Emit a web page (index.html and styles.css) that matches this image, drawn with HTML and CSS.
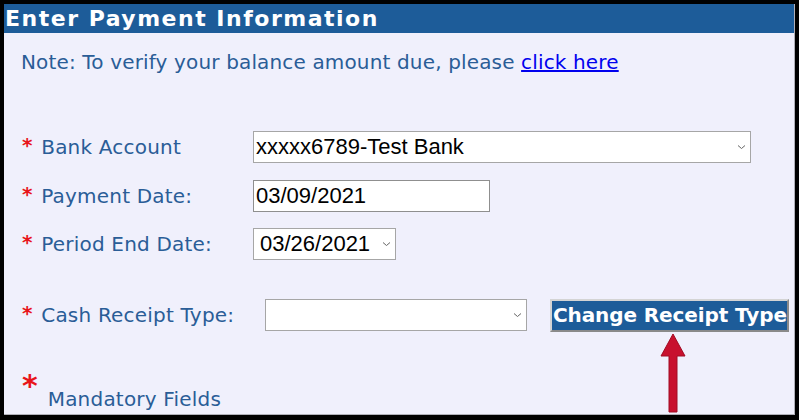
FILE: index.html
```html
<!DOCTYPE html>
<html>
<head>
<meta charset="utf-8">
<link rel="stylesheet" href="styles.css">
</head>
<body>
<div class="frame">
  <div class="panel">
    <div class="header">Enter Payment Information</div>
    <div class="content">
      <p class="note">Note: To verify your balance amount due, please <a href="#" class="link">click here</a></p>
      <div class="rows">
        <div class="row row-bank">
          <div class="label"><span class="star">*</span> Bank Account</div>
          <div class="select select-bank"><span class="value">xxxxx6789-Test Bank</span><svg class="chev" width="9" height="6" viewBox="0 0 9 6"><path d="M1 1.5 L4.5 4.5 L8 1.5" fill="none" stroke="#666" stroke-width="1"/></svg></div>
        </div>
        <div class="row row-pay">
          <div class="label"><span class="star">*</span> Payment Date:</div>
          <div class="input input-pay"><span class="value">03/09/2021</span></div>
        </div>
        <div class="row row-period">
          <div class="label"><span class="star">*</span> Period End Date:</div>
          <div class="select select-period"><span class="value">03/26/2021</span><svg class="chev" width="9" height="6" viewBox="0 0 9 6"><path d="M1 1.5 L4.5 4.5 L8 1.5" fill="none" stroke="#666" stroke-width="1"/></svg></div>
        </div>
        <div class="row row-cash">
          <div class="label label-cash"><span class="star">*</span> Cash Receipt Type:</div>
          <div class="select select-cash"><span class="value"></span><svg class="chev" width="9" height="6" viewBox="0 0 9 6"><path d="M1 1.5 L4.5 4.5 L8 1.5" fill="none" stroke="#666" stroke-width="1"/></svg></div>
          <button class="btn">Change Receipt Type</button>
        </div>
      </div>
      <div class="mandatory"><span class="bigstar">*</span><span class="mtext">Mandatory Fields</span></div>
    </div>
    <svg class="arrow" width="30" height="80" viewBox="0 0 30 80"><polygon points="15,0 27,22 19,22 19,78 11,78 11,22 3,22" fill="#c8102e" stroke="#a00c24" stroke-width="1" stroke-linejoin="round"/></svg>
  </div>
</div>
</body>
</html>
```
FILE: styles.css
```css
html, body {
  margin: 0;
  padding: 0;
  background: #000;
}
.frame {
  width: 799px;
  height: 420px;
  box-sizing: border-box;
  padding: 4px 4px 5px 4px;
  background: #000;
}
.panel {
  position: relative;
  width: 100%;
  height: 100%;
  box-sizing: border-box;
  background: #f0f0fc;
  border-right: 1px solid #b0b0b8;
  border-bottom: 1px solid #b0b0b8;
  font-family: "DejaVu Sans", Verdana, sans-serif;
  overflow: hidden;
}
.header {
  height: 29px;
  line-height: 29px;
  background: #1d5c99;
  color: #fff;
  font-weight: bold;
  font-size: 22px;
  letter-spacing: 1.5px;
  padding-left: 1px;
  white-space: nowrap;
}
.content {
  padding: 17px 0 0 18px;
}
.note {
  margin: 0;
  height: 24px;
  line-height: 24px;
  font-size: 20px;
  letter-spacing: 0.15px;
  color: #2a5d97;
  white-space: nowrap;
  margin-left: -1px;
}
.link {
  color: #0000ee;
  text-decoration: underline;
}
.rows {
  margin-top: 57px;
  display: flex;
  flex-direction: column;
}
.row {
  display: flex;
  align-items: center;
  height: 32px;
}
.row-pay { margin-top: 17px; }
.row-period { margin-top: 16px; }
.row-cash { margin-top: 39px; }
.label {
  width: 231px;
  flex: none;
  font-size: 20px;
  letter-spacing: 0.2px;
  color: #2a5d97;
  white-space: nowrap;
}
.label-cash { width: 243px; }
.star {
  color: #e8141a;
  font-weight: bold;
  position: relative;
  top: -2px;
  margin-right: 2px;
}
.select, .input {
  box-sizing: border-box;
  height: 32px;
  background: #fff;
  display: flex;
  align-items: center;
  font-family: "Liberation Sans", Arial, sans-serif;
  font-size: 22px;
  color: #000;
}
.select {
  border: 1px solid #a6a6a6;
  justify-content: space-between;
  padding: 0 4px 0 2px;
}
.input {
  border: 1px solid #8f8f8f;
  padding: 0 2px;
}
.select-bank { width: 498px; }
.input-pay { width: 237px; }
.select-period { width: 143px; padding-left: 6px; }
.select-cash { width: 262px; }
.chev { flex: none; }
.btn {
  margin-left: 23px;
  height: 33px;
  width: 239px;
  box-sizing: border-box;
  background: #1d5c99;
  color: #fff;
  font-family: "DejaVu Sans", Verdana, sans-serif;
  font-weight: bold;
  font-size: 20px;
  letter-spacing: -0.1px;
  border: 2px solid;
  border-color: #d4d4d4 #8a8a8a #8a8a8a #d4d4d4;
  padding: 0 0 0 1px;
  text-align: left;
  white-space: nowrap;
  overflow: hidden;
}
.mandatory {
  margin-top: 40px;
  display: flex;
  align-items: flex-end;
  height: 40px;
}
.bigstar {
  color: #e8141a;
  font-weight: bold;
  font-size: 30px;
  line-height: 30px;
  align-self: flex-start;
  margin-top: 0;
}
.mtext {
  margin-left: 10px;
  font-size: 20px;
  letter-spacing: 0.2px;
  color: #2a5d97;
  line-height: 24px;
}
.arrow {
  position: absolute;
  left: 654px;
  top: 330px;
}
```
